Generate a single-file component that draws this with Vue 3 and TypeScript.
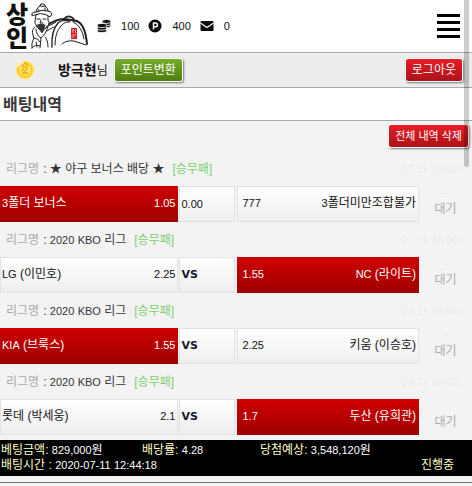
<script setup lang="ts">
import { h } from 'vue'

interface Match {
  league: string
  date: string
  home: string
  homeOdds: string
  middle: string
  awayOdds: string
  away: string
  pick: 'home' | 'away'
}

const matches: Match[] = [
  { league: '★ 야구 보너스 배당 ★', date: '07-11 18:30', home: '3폴더 보너스', homeOdds: '1.05', middle: '0.00', awayOdds: '777', away: '3폴더미만조합불가', pick: 'home' },
  { league: '2020 KBO 리그', date: '07-11 18:00', home: 'LG (이민호)', homeOdds: '2.25', middle: 'VS', awayOdds: '1.55', away: 'NC (라이트)', pick: 'away' },
  { league: '2020 KBO 리그', date: '07-11 18:00', home: 'KIA (브룩스)', homeOdds: '1.55', middle: 'VS', awayOdds: '2.25', away: '키움 (이승호)', pick: 'home' },
  { league: '2020 KBO 리그', date: '07-11 18:00', home: '롯데 (박세웅)', homeOdds: '2.1', middle: 'VS', awayOdds: '1.7', away: '두산 (유희관)', pick: 'away' },
]

// Latin letters and digits are set one size below the Hangul around them.
const Mixed = (props: { text: string }) =>
  h('span', { class: 'mixed' }, (props.text.match(/[A-Za-z0-9.,:-]+|[^A-Za-z0-9.,:-]+/g) ?? []).map((run) =>
    /^[A-Za-z0-9.,:-]/.test(run) ? h('span', { class: 'latin' }, run) : run,
  ))
Mixed.props = ['text']
</script>

<template>
  <div class="page">
    <header class="top">
      <a class="logo" href="#" aria-label="상인">
        <span class="logo-name"><span>상</span><span>인</span></span>
        <svg class="logo-art" viewBox="0 0 58 50" fill="none" stroke="#222" stroke-width="1" stroke-linecap="round" stroke-linejoin="round" aria-hidden="true">
          <path d="M1 14Q0 11 5 11L6 8Q8 5 9 5Q9 2 12 3Q14 3 14 5Q17 7 17 10Q22 11 20 15Q18 17 16 14Q9 11 4 14Q2 15 1 14Z" fill="#f6f6f6" />
          <path d="M5 11Q11 8 17 10M9 5Q11 6 14 5M7 8L8 10M14 7L14 9" />
          <path d="M5 14L4 20Q3 21 5 24Q6 27 8 28M17 15L17 20Q19 20 18 23Q17 26 14 28M6 18L9 18M12 18L15 18M10 19L9 22L12 22" />
          <path d="M6 24Q10 22 14 24L13 29L11 32L8 28Z" fill="#333" stroke-width=".6" />
          <path d="M4 26Q0 29 2 34Q4 37 1 42L1 47M5 28Q5 34 10 37Q15 33 17 26M3 37Q8 38 9 41M10 37L9 47M5 41L6 46" />
          <path d="M15 26Q20 24 25 21M16 30Q20 27 23 26M14 36Q17 39 17 46M1 47Q4 43 9 45" />
          <path d="M18 23Q26 18 34 18L46 20" stroke-width="1.8" />
          <path d="M21 46Q20 30 27 22Q31 18 38 20" stroke-width="1.4" />
          <path d="M24 44Q24 31 30 25Q34 20 39 21" />
          <path d="M33 18Q36 14 40 16Q43 17 43 20" stroke-width="1.6" />
          <path d="M45 20Q54 22 56 43" stroke-width="2" />
          <path d="M42 21Q51 25 53 38M31 43Q35 39 43 40L55 44" />
          <rect x="40" y="27" width="6" height="11" rx=".6" fill="#d71924" stroke="none" />
          <path d="M41 29H43M42 29V32M41 34H45M41 36H43M44.500 29V32" stroke="#fff" stroke-width=".6" />
        </svg>
      </a>
      <div class="balances">
        <span class="balance">
          <svg viewBox="0 0 14 14" role="img" aria-label="캐쉬">
            <g fill="#111" stroke="#fff" stroke-width=".8">
              <ellipse cx="9.5" cy="6.8" rx="4.3" ry="2" /><ellipse cx="9.5" cy="4.8" rx="4.3" ry="2" /><ellipse cx="9.5" cy="2.5" rx="4.3" ry="2" />
              <ellipse cx="5" cy="11.5" rx="4.7" ry="2.1" /><ellipse cx="5" cy="9" rx="4.7" ry="2.1" /><ellipse cx="5" cy="6.5" rx="4.7" ry="2.1" />
            </g>
          </svg>
          <span>100</span>
        </span>
        <span class="balance">
          <svg viewBox="0 0 14 14" role="img" aria-label="포인트">
            <circle cx="7" cy="7" r="6.5" fill="#0a0a0a" />
            <path d="M5.5 10.5V4H7.5A1.9 1.9 0 0 1 7.5 7.8H5.5" fill="none" stroke="#fff" stroke-width="1.5" />
          </svg>
          <span>400</span>
        </span>
        <span class="balance">
          <svg viewBox="0 0 14 14" role="img" aria-label="쪽지">
            <rect x=".5" y="2" width="13" height="10" rx="1" fill="#0a0a0a" />
            <path d="M.5 4L7 8.5L13.5 4" fill="none" stroke="#fff" stroke-width="1.1" />
          </svg>
          <span>0</span>
        </span>
      </div>
      <button class="menu" type="button" aria-label="메뉴"><i /><i /><i /><i /></button>
    </header>

    <section class="user">
      <svg class="coin" viewBox="0 0 20 20" aria-hidden="true">
        <circle cx="10" cy="10" r="9" fill="#ffd62e" stroke="#ffe98a" />
        <circle cx="10" cy="10" r="6.5" fill="#ffe75a" stroke="#f9bd2b" />
        <path d="M7 6L10 3L13 6M7 8Q12 5 12 9L8 13H13M6 11L9 9" fill="none" stroke="#f0a626" stroke-width="1.3" />
        <path d="M3 7Q5 3 9 2" fill="none" stroke="#fffbd0" stroke-width="1.3" />
      </svg>
      <span class="name"><b>방극현</b>님</span>
      <button class="btn green" type="button">포인트변환</button>
      <button class="btn red logout" type="button">로그아웃</button>
    </section>

    <h1 class="title">배팅내역</h1>

    <main class="history">
      <div class="tools"><button class="btn red clear" type="button">전체 내역 삭제</button></div>
      <article v-for="(m, i) in matches" :key="i">
        <div class="league">
          <span class="label">리그명</span>
          <span class="league-name">: <Mixed :text="m.league" /></span>
          <span class="kind">[승무패]</span>
          <time class="date">{{ m.date }}</time>
        </div>
        <div class="match">
          <div class="cell" :class="{ picked: m.pick === 'home' }">
            <Mixed :text="m.home" /><Mixed :text="m.homeOdds" />
          </div>
          <div class="cell middle">
            <b v-if="m.middle === 'VS'">VS</b><Mixed v-else :text="m.middle" />
          </div>
          <div class="cell away" :class="{ picked: m.pick === 'away' }">
            <Mixed :text="m.awayOdds" /><Mixed :text="m.away" />
          </div>
          <div class="status"><span class="score">-</span><span>대기</span></div>
        </div>
      </article>

      <footer class="summary">
        <div class="sums">
          <span><em>베팅금액:</em> <Mixed text="829,000원" /></span>
          <span><em>배당률:</em> <Mixed text="4.28" /></span>
          <span><em>당첨예상:</em> <Mixed text="3,548,120원" /></span>
        </div>
        <div class="when">
          <span><em>배팅시간 :</em> <Mixed text="2020-07-11 12:44:18" /></span>
          <em>진행중</em>
        </div>
      </footer>
    </main>
    <div class="scroll-thumb" />
  </div>
</template>

<style>
body {
  background: #f3f3f3;
}

.mixed {
  white-space: nowrap;
}

.latin {
  font-size: 11px;
}
</style>

<style scoped>
.page {
  position: relative;
  font: 12px/16px "Liberation Sans", "Noto Sans CJK KR", sans-serif;
  color: #111;
}

.page * {
  box-sizing: border-box;
}

.top {
  display: flex;
  align-items: center;
  height: 53px;
  padding: 0 12px 0 6px;
  background: #fff;
  border-bottom: 1px solid #a9a9a9;
}

.logo {
  display: flex;
  gap: 3px;
  color: #111;
  text-decoration: none;
}

.logo-name {
  display: flex;
  flex-direction: column;
  font-size: 24px;
  font-weight: 900;
  line-height: 24px;
  padding-top: 2px;
}

.logo-art {
  width: 58px;
  height: 50px;
}

.balances {
  display: flex;
  gap: 9px;
  margin-left: 8px;
  font-size: 11px;
}

.balance {
  display: flex;
  align-items: center;
  gap: 10px;
}

.balance svg {
  width: 14px;
  height: 14px;
}

.menu {
  display: flex;
  flex-direction: column;
  gap: 4px;
  margin-left: auto;
  padding: 0;
  border: 0;
  background: none;
}

.menu i {
  width: 23px;
  height: 3px;
  background: #000;
}

.user {
  display: flex;
  align-items: center;
  height: 35px;
  padding: 0 9px 0 15px;
  background: #ededed;
  border-bottom: 1px solid #a9a9a9;
}

.coin {
  width: 20px;
  height: 20px;
}

.name {
  margin: 0 6px 0 23px;
}

.name b {
  font-size: 14px;
}

.btn {
  height: 24px;
  padding: 0 6px;
  border: 1px solid #fff;
  border-radius: 3px;
  font: inherit;
  color: #fff;
  white-space: nowrap;
  box-shadow: 1px 1px 2px #777;
}

.green {
  background: linear-gradient(#75ae2b, #4d7d0c);
}

.red {
  background: linear-gradient(#e91c25, #aa1317);
}

.logout {
  margin-left: auto;
}

.clear {
  font-size: 11px;
}

.title {
  margin: 0;
  padding: 0 3px;
  height: 33px;
  font-size: 16px;
  font-weight: 700;
  line-height: 34px;
  color: #3a3a3a;
  background: #fff;
  border-bottom: 1px solid #a9a9a9;
}

.tools {
  display: flex;
  justify-content: flex-end;
  height: 30px;
  padding: 3px 3px 0 0;
}

.league {
  display: flex;
  align-items: center;
  height: 35px;
  padding: 0 13px 0 6px;
  white-space: nowrap;
}

.label {
  color: #aaa;
  margin-right: 4px;
}

.league-name {
  color: #333;
}

.kind {
  margin-left: 8px;
  color: #7bcf6b;
}

.date {
  margin-left: auto;
  font-size: 11px;
  color: #ebebeb;
}

.match {
  display: grid;
  grid-template-columns: 179fr 57px 182fr 53px;
  height: 36px;
}

.cell {
  display: flex;
  justify-content: space-between;
  align-items: center;
  padding: 0 2px 2px 1px;
  border: 1px solid #e2e2e2;
  background: linear-gradient(#fff, #eee);
  margin-right: 1px;
}

.middle {
  padding: 0 0 0 1px;
}

.middle b {
  font: bold 11px/16px "DejaVu Sans", sans-serif;
  color: #17172c;
}

.away {
  margin: 0 0 0 1px;
  padding-left: 4px;
}

.picked {
  border-color: transparent;
  background: linear-gradient(#d00000, #9e0000) border-box;
  color: #fff;
}

.status {
  display: flex;
  flex-direction: column;
  align-items: center;
  color: #aaa;
}

.score {
  color: #e6e6e6;
  line-height: 15px;
}

.summary {
  margin-top: 5px;
  padding: 3px 0;
  background: #000;
  color: #fff;
  line-height: 15px;
}

.summary em {
  font-style: normal;
  color: #ffffc4;
}

.sums {
  display: grid;
  grid-template-columns: 141fr 118fr 212fr;
  padding-left: 1px;
}

.when {
  display: flex;
  justify-content: space-between;
  padding: 0 18px 0 1px;
}

.history {
  padding-bottom: 6px;
  border-bottom: 1px solid #777;
}

.scroll-thumb {
  position: absolute;
  top: 0;
  right: 3px;
  width: 5px;
  height: 167px;
  border-radius: 0 0 3px 3px;
  background: rgba(0, 0, 0, 0.2);
}
</style>
